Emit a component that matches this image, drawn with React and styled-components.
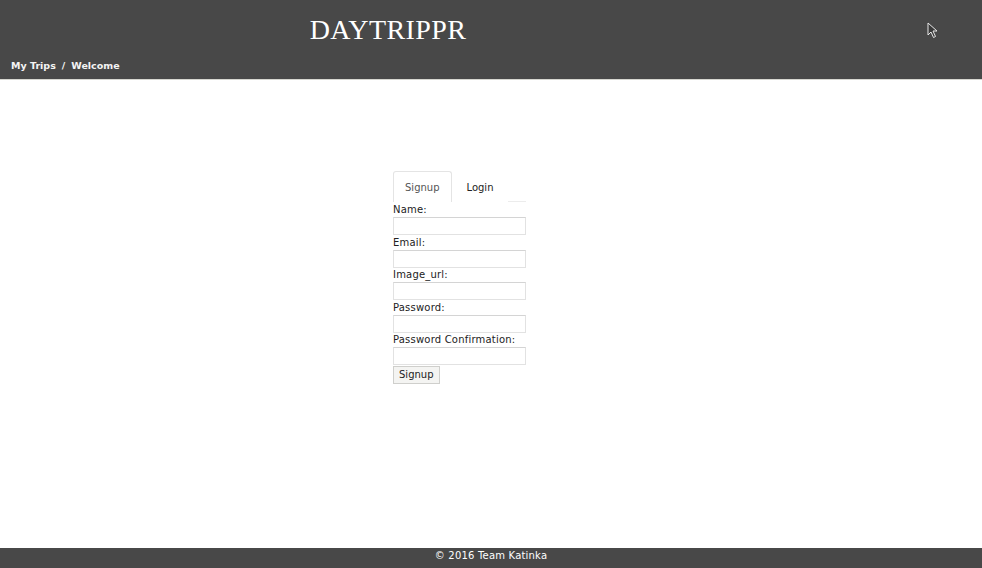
import React, { useState } from "react";
import styled, { createGlobalStyle } from "styled-components";

const theme = {
  bar: "#484848",
  line: "#d6d6d0",
  text: "#333333",
  ui: "'DejaVu Sans', Verdana, sans-serif",
};

const GlobalStyle = createGlobalStyle`
  html, body { margin: 0; padding: 0; background: #fff; }
  body { font-family: ${theme.ui}; color: ${theme.text}; }
  * { box-sizing: border-box; }
`;

const Page = styled.div`
  display: flex;
  flex-direction: column;
  min-height: 100vh;
`;

const Header = styled.header`
  position: relative;
  background: ${theme.bar};
  height: 80px;
  border-bottom: 1px solid ${theme.line};
  display: flex;
  flex-direction: column;
`;

const Brand = styled.h1`
  width: 776px;
  margin: 0;
  padding-top: 14px;
  text-align: center;
  font-family: "Liberation Serif", "Times New Roman", serif;
  font-weight: 400;
  font-size: 28px;
  line-height: 32px;
  letter-spacing: 0.4px;
  color: #fff;
`;

const Crumbs = styled.nav`
  display: flex;
  gap: 6px;
  padding: 14px 0 0 11px;
  font-size: 9.5px;
  font-weight: 700;
  color: #f4f4f4;
`;

const Cursor = styled.svg`
  position: absolute;
  top: 22px;
  left: 927px;
`;

const Main = styled.main`
  flex: 1;
  display: flex;
  justify-content: center;
  padding: 91px 0 0 0;
`;

const Panel = styled.div`
  width: 196px;
  font-size: 10px;
`;

const Tabs = styled.div`
  display: flex;
  width: 133px;
  border-bottom: 1px solid #ececec;
  height: 31px;
`;

const Tab = styled.button`
  font-family: ${theme.ui};
  font-size: 10px;
  color: ${(p) => (p.$active ? "#555" : "#222")};
  background: #fff;
  border: 1px solid ${(p) => (p.$active ? "#e4e4e4" : "transparent")};
  border-bottom: none;
  border-radius: 3px 3px 0 0;
  height: 31px;
  margin-bottom: -1px;
  padding: 0 ${(p) => (p.$active ? "11px" : "14px")};
  cursor: pointer;
`;

const Form = styled.form`
  display: flex;
  flex-direction: column;
  align-items: flex-start;
  padding-top: 1px;
`;

const Label = styled.label`
  display: block;
  line-height: 13px;
  letter-spacing: 0.2px;
  color: #222;
  margin-bottom: 1px;
`;

const Input = styled.input`
  display: block;
  width: 133px;
  height: 18px;
  border: 1px solid #e2e2e2;
  border-top-color: #d4d4d4;
  padding: 0 2px;
  margin: 0 0 0.5px;
  font-family: ${theme.ui};
  font-size: 10px;
`;

const Submit = styled.button`
  font-family: ${theme.ui};
  font-size: 10px;
  color: #222;
  background: #f4f4f2;
  border: 1px solid #cfcfcc;
  height: 18px;
  padding: 0 5px;
  margin-top: 0;
`;

const Footer = styled.footer`
  background: ${theme.bar};
  height: 20px;
  display: flex;
  align-items: center;
  justify-content: center;
  padding-bottom: 5px;
  color: #fff;
  font-size: 10px;
  letter-spacing: 0.2px;
`;

const fields = ["Name", "Email", "Image_url", "Password", "Password Confirmation"];

export default function App() {
  const [tab, setTab] = useState("signup");

  return (
    <Page>
      <GlobalStyle />
      <Header>
        <Brand>DAYTRIPPR</Brand>
        <Crumbs>
          <span>My Trips</span>
          <span>/</span>
          <span>Welcome</span>
        </Crumbs>
        <Cursor width="12" height="18" viewBox="0 0 12 18">
          <path d="M1 1 L1 13 L4 10 L6.5 15.5 L8.5 14.5 L6 9 L10 9 Z" fill="#3a3a3a" stroke="#e8e8e8" strokeWidth="1" />
        </Cursor>
      </Header>

      <Main>
        <Panel>
          <Tabs>
            <Tab $active={tab === "signup"} onClick={() => setTab("signup")}>Signup</Tab>
            <Tab $active={tab === "login"} onClick={() => setTab("login")}>Login</Tab>
          </Tabs>
          <Form onSubmit={(e) => e.preventDefault()}>
            {fields.map((f) => (
              <div key={f}>
                <Label>{f}:</Label>
                <Input type={f.startsWith("Password") ? "password" : "text"} />
              </div>
            ))}
            <Submit type="submit">Signup</Submit>
          </Form>
        </Panel>
      </Main>

      <Footer>© 2016 Team Katinka</Footer>
    </Page>
  );
}
